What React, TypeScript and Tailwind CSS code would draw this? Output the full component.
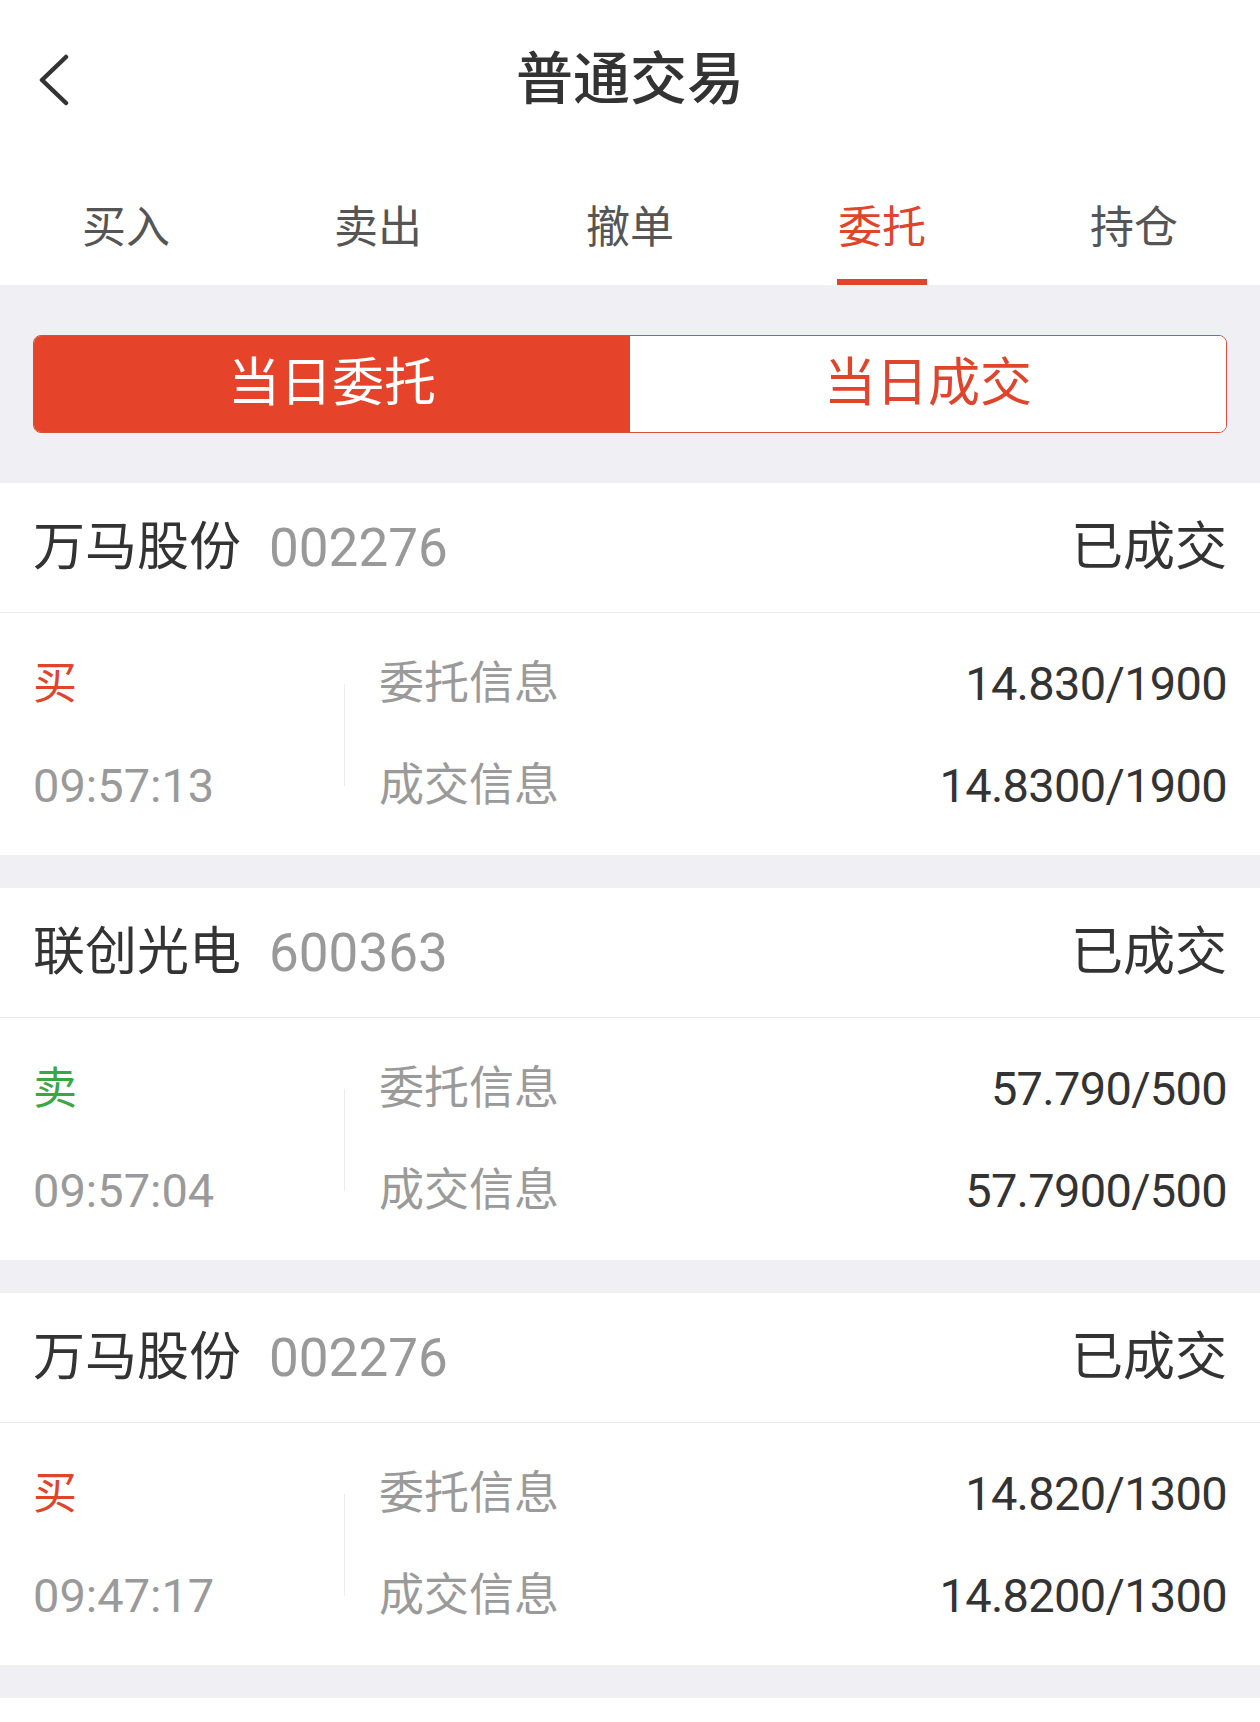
import React from 'react';

type Order = {
  name: string;
  code: string;
  status: string;
  side: 'buy' | 'sell';
  time: string;
  entrust: string;
  deal: string;
};

const orders: Order[] = [
  { name: '万马股份', code: '002276', status: '已成交', side: 'buy', time: '09:57:13', entrust: '14.830/1900', deal: '14.8300/1900' },
  { name: '联创光电', code: '600363', status: '已成交', side: 'sell', time: '09:57:04', entrust: '57.790/500', deal: '57.7900/500' },
  { name: '万马股份', code: '002276', status: '已成交', side: 'buy', time: '09:47:17', entrust: '14.820/1300', deal: '14.8200/1300' },
];

const tabs = ['买入', '卖出', '撤单', '委托', '持仓'];

function OrderCard({ order }: { order: Order }) {
  return (
    <div className="bg-white">
      <div className="h-[130px] px-[33px] flex items-center justify-between border-b border-[#ebebeb]">
        <div className="flex items-center">
          <span className="text-[52px] leading-[60px] text-[#333]">{order.name}</span>
          <span className="ml-[28px] text-[53px] leading-[60px] text-[#999]">{order.code}</span>
        </div>
        <span className="text-[52px] leading-[60px] text-[#333]">{order.status}</span>
      </div>
      <div className="flex px-[33px] pt-[20px] pb-[18px]">
        <div className="w-[311px] flex flex-col">
          <div className="h-[102px] flex items-center">
            <span
              className={
                order.side === 'buy'
                  ? 'text-[44px] leading-[52px] text-[#e0442b]'
                  : 'text-[44px] leading-[52px] text-[#3aa745]'
              }
            >
              {order.side === 'buy' ? '买' : '卖'}
            </span>
          </div>
          <div className="h-[102px] flex items-center">
            <span className="text-[47px] leading-[52px] text-[#9a9a9a]">{order.time}</span>
          </div>
        </div>
        <div className="w-px my-[51px] bg-[#ececec]" />
        <div className="flex-1 pl-[34px] flex flex-col">
          <div className="h-[102px] flex items-center justify-between">
            <span className="text-[45px] leading-[52px] text-[#9a9a9a]">委托信息</span>
            <span className="text-[47px] leading-[52px] tracking-[-0.7px] text-[#333]">{order.entrust}</span>
          </div>
          <div className="h-[102px] flex items-center justify-between">
            <span className="text-[45px] leading-[52px] text-[#9a9a9a]">成交信息</span>
            <span className="text-[47px] leading-[52px] tracking-[-0.7px] text-[#333]">{order.deal}</span>
          </div>
        </div>
      </div>
    </div>
  );
}

export default function App() {
  return (
    <div className="min-h-[1722px] flex flex-col bg-[#efeff4] font-['Roboto','Noto_Sans_CJK_SC',sans-serif]">
      <div className="bg-white">
        <div className="h-[160px] grid grid-cols-[1fr_auto_1fr] items-center">
          <div className="pl-[38px] flex items-center">
            <svg width="32" height="52" viewBox="0 0 32 52" fill="none">
              <path
                d="M28 3 L4 26 L28 49"
                stroke="#333"
                strokeWidth="4.5"
                strokeLinecap="round"
                strokeLinejoin="round"
              />
            </svg>
          </div>
          <h1 className="text-[57px] leading-[66px] text-[#333] font-medium">普通交易</h1>
          <div />
        </div>
        <div className="h-[125px] flex">
          {tabs.map((t) => {
            const active = t === '委托';
            return (
              <div key={t} className="flex-1 flex flex-col items-center">
                <span
                  className={
                    active
                      ? 'mt-[42px] text-[44px] leading-[52px] text-[#e0442b]'
                      : 'mt-[42px] text-[44px] leading-[52px] text-[#555]'
                  }
                >
                  {t}
                </span>
                <div className={active ? 'mt-auto h-[6px] w-[90px] bg-[#e0442b]' : 'mt-auto h-[6px]'} />
              </div>
            );
          })}
        </div>
      </div>

      <div className="py-[50px] px-[33px]">
        <div className="h-[98px] flex rounded-[8px] border border-[#d4503c] overflow-hidden">
          <div className="flex-1 bg-[#e5432a] flex items-center justify-center">
            <span className="text-[52px] leading-[60px] text-white">当日委托</span>
          </div>
          <div className="flex-1 bg-white flex items-center justify-center">
            <span className="text-[52px] leading-[60px] text-[#e0442b]">当日成交</span>
          </div>
        </div>
      </div>

      <div className="flex flex-col gap-[33px]">
        {orders.map((o, i) => (
          <OrderCard key={i} order={o} />
        ))}
      </div>
      <div className="mt-[33px] flex-1 bg-white" />
    </div>
  );
}
